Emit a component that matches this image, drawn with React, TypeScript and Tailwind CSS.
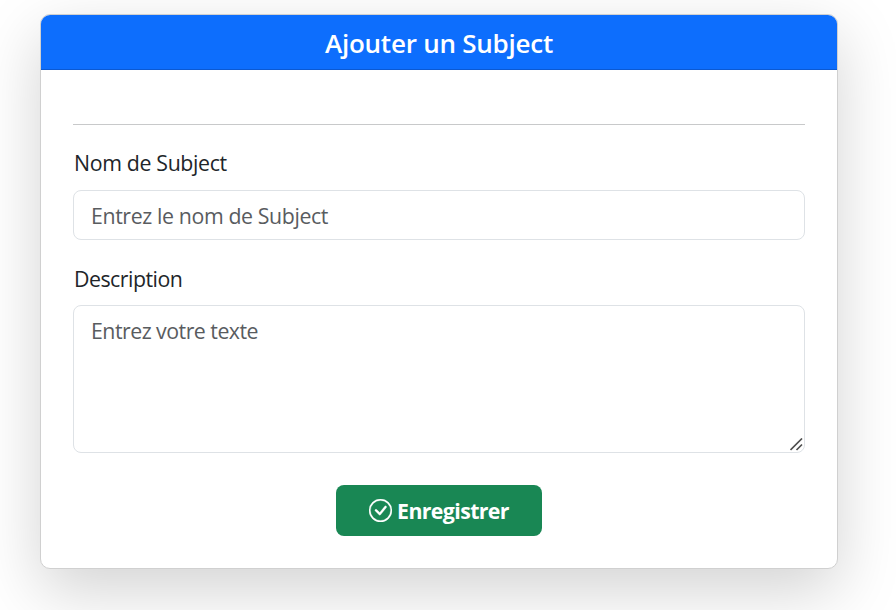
export default function App() {
  return (
    <main className="h-[610px] w-[896px] overflow-hidden bg-white pl-[40px] pt-[14px] font-['Open_Sans','Noto_Sans',sans-serif] text-[21.33px] leading-8 text-[#212529]">
      <section className="h-[555px] w-[798px] rounded-[10px] border border-[#d0d0d0] bg-white shadow-[0_21.33px_64px_rgba(0,0,0,0.175)]">
        <header className="flex h-[55px] items-center justify-center rounded-t-[9px] border-b border-[#0b59d2] bg-[#0d6efd] pt-[2px]">
          <h1 className="text-[26px] font-semibold leading-8 tracking-[-0.23px] text-white">
            <span>Ajouter un Subject</span>
          </h1>
        </header>
        <form className="flex flex-col px-8 pt-[54px]">
          <hr className="border-0 border-t border-[#c8c9ca]" />
          <label htmlFor="nom" className="mt-[22px] h-8 self-start pl-px tracking-[-0.35px]">
            Nom de Subject
          </label>
          <input
            id="nom"
            placeholder="Entrez le nom de Subject"
            className="mt-[11px] h-[50px] rounded-lg border border-[#dee2e6] bg-white px-[17px] leading-8 tracking-[-0.39px] outline-none placeholder:text-[#595c5f]"
          />
          <label htmlFor="description" className="mt-[23px] h-8 self-start pl-px tracking-[-0.5px]">
            Description
          </label>
          <div className="relative mt-[10px] h-[148px]">
            <textarea
              id="description"
              placeholder="Entrez votre texte"
              className="block h-full w-full resize-none rounded-lg border border-[#dee2e6] bg-white px-[17px] pb-2 pt-[9px] leading-8 tracking-[-0.52px] outline-none placeholder:text-[#595c5f]"
            />
            <svg className="absolute bottom-[2px] right-[2px] h-[13px] w-[13px]" viewBox="0 0 13 13" fill="none" stroke="#505050" strokeWidth="1.7">
              <path d="M.5 12 12 .5M6.5 12 12 6.5" />
            </svg>
          </div>
          <button
            type="button"
            className="mt-8 flex h-[51px] w-[206px] items-center justify-center gap-[5px] self-center rounded-lg bg-[#198754] font-bold text-white"
          >
            <svg className="h-[23px] w-[23px]" viewBox="0 0 16 16" fill="currentColor" stroke="currentColor" strokeWidth="0.2">
              <path d="M8 15A7 7 0 1 1 8 1a7 7 0 0 1 0 14m0 1A8 8 0 1 0 8 0a8 8 0 0 0 0 16" />
              <path d="m10.97 4.97-.02.022-3.473 4.425-2.093-2.094a.75.75 0 0 0-1.06 1.06L6.97 11.03a.75.75 0 0 0 1.079-.02l3.992-4.99a.75.75 0 0 0-1.071-1.05" />
            </svg>
            <span className="tracking-[-0.62px]">Enregistrer</span>
          </button>
        </form>
      </section>
    </main>
  );
}
